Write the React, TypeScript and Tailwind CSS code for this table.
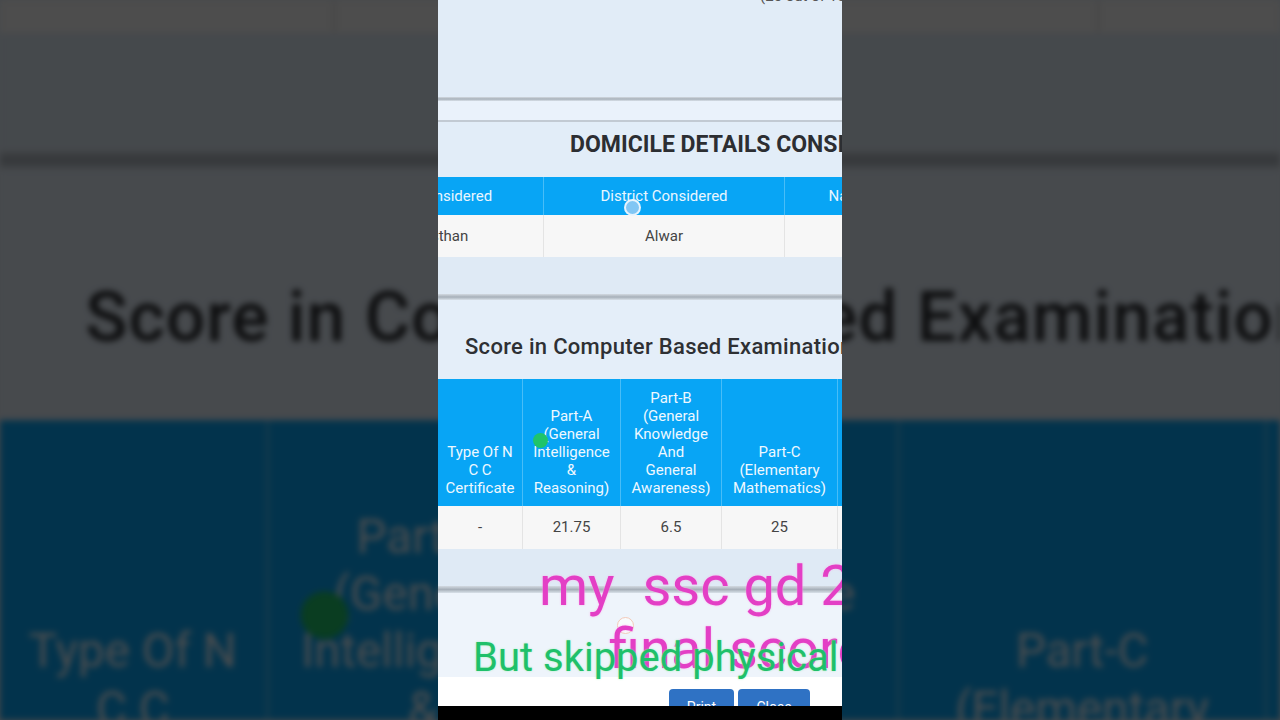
import React from "react";

const roboto = "font-['Roboto','Noto_Sans',sans-serif]";

// Score table header columns
const scoreCols = [
  { w: "w-[85px]", lines: ["Type Of N", "C C", "Certificate"], value: "-" },
  { w: "w-[98px]", lines: ["Part-A", "(General", "Intelligence", "&", "Reasoning)"], value: "21.75" },
  { w: "w-[101px]", lines: ["Part-B", "(General", "Knowledge", "And", "General", "Awareness)"], value: "6.5" },
  { w: "w-[116px]", lines: ["Part-C", "(Elementary", "Mathematics)"], value: "25" },
  { w: "w-[100px]", lines: [], value: "" },
];

const domicileCols = [
  { w: "w-[217px]", head: "State Considered", value: "Rajasthan" },
  { w: "w-[241px]", head: "District Considered", value: "Alwar" },
  { w: "w-[251px]", head: "Native Place Considered", value: "" },
];

function ShadowLine({ h }: { h: string }) {
  return <div className={`${h} shrink-0 bg-linear-to-b from-[#d3dae1] via-[#a7b0b9] to-[#d9e1e9]`} />;
}

function Frame() {
  return (
    <div className={`relative w-[404px] h-[720px] shrink-0 overflow-hidden flex flex-col bg-[#e2edf8] ${roboto}`}>
      {/* top of page, mostly scrolled away */}
      <div className="h-[97px] shrink-0 bg-[#e1ecf7] overflow-hidden">
        <div className="-mt-[15px] pl-[322px] text-[15px] text-[#555] whitespace-nowrap">(25 out of 100)</div>
      </div>
      <ShadowLine h="h-[4px]" />
      <div className="h-[19px] shrink-0 bg-[#eaf2fb]" />
      <div className="h-[2px] shrink-0 bg-[#c2cad3]" />

      {/* domicile card */}
      <div className="h-[55px] shrink-0 flex items-center pb-[9px] pl-[132px] whitespace-nowrap text-[23px] font-bold text-[#2c2e32]">
        DOMICILE DETAILS CONSIDERED
      </div>
      <div className="-ml-[111px] flex flex-col">
        <div className="flex h-[38px] bg-[#08a5f5]">
          {domicileCols.map((c) => (
            <div
              key={c.head}
              className={`${c.w} shrink-0 flex items-center justify-center border-r border-[#48bdf7] text-[15px] text-[#e9f6ff] whitespace-nowrap`}
            >
              {c.head}
            </div>
          ))}
        </div>
        <div className="flex h-[42px] bg-[#f7f7f7]">
          {domicileCols.map((c) => (
            <div
              key={c.head}
              className={`${c.w} shrink-0 flex items-center justify-center border-r border-[#e4e4e4] text-[15px] text-[#444]`}
            >
              {c.value}
            </div>
          ))}
        </div>
      </div>
      <div className="h-[37px] shrink-0 bg-[#dfeaf5]" />
      <ShadowLine h="h-[6px]" />

      {/* score card */}
      <div className="h-[79px] shrink-0 flex items-center pt-[13px] pl-[27px] whitespace-nowrap text-[22px] tracking-[0.3px] font-medium text-[#2e3034] bg-[#e4eef9]">
        Score in Computer Based Examination
      </div>
      <div className="flex h-[127px] shrink-0 bg-[#08a5f5]">
        {scoreCols.map((c, i) => (
          <div
            key={i}
            className={`${c.w} shrink-0 flex flex-col items-center justify-end pb-[9px] border-r border-[#48bdf7] text-[15px] leading-[18px] text-[#eef8ff] text-center`}
          >
            {c.lines.map((l) => (
              <span key={l + i} className="whitespace-nowrap">
                {l}
              </span>
            ))}
          </div>
        ))}
      </div>
      <div className="flex h-[43px] shrink-0 bg-[#f7f7f7]">
        {scoreCols.map((c, i) => (
          <div
            key={i}
            className={`${c.w} shrink-0 flex items-center justify-center border-r border-[#e4e4e4] text-[15px] text-[#444]`}
          >
            {c.value}
          </div>
        ))}
      </div>
      <div className="h-[37px] shrink-0 bg-[#dfeaf5]" />
      <ShadowLine h="h-[7px]" />
      <div className="h-[84px] shrink-0 bg-[#eef4fb]" />

      {/* footer buttons */}
      <div className="h-[29px] shrink-0 bg-white overflow-hidden flex items-start gap-[4px] pl-[231px] pt-[12px]">
        <div className="w-[65px] h-[34px] rounded-[4px] bg-[#2f72c4] text-white text-[14px] flex justify-center pt-[8px]">Print</div>
        <div className="w-[72px] h-[34px] rounded-[4px] bg-[#2f72c4] text-white text-[14px] flex justify-center pt-[8px]">Close</div>
      </div>
      <div className="flex-1 bg-black" />

      {/* touches and video captions drawn over the recording */}
      <div className="absolute left-[95px] top-[433px] w-[15px] h-[15px] rounded-full bg-[#1fc46b]" />
      <div className="absolute left-[186px] top-[199px] w-[17px] h-[17px] rounded-full bg-[#8fcaf4]/90 border-2 border-white/80" />
      <div className="absolute left-[179px] top-[617px] w-[17px] h-[17px] rounded-full bg-white/60 border border-[#f3c9b8]" />

      <div className="absolute left-[101px] top-[558px] whitespace-pre text-[56px] leading-none text-[#e33fc5] [text-shadow:0_0_2px_rgba(255,170,235,0.9)]">
        my  ssc gd 2024
      </div>
      <div className="absolute left-[171px] top-[621px] whitespace-pre text-[56px] leading-none text-[#e33fc5] [text-shadow:0_0_2px_rgba(255,170,235,0.9)]">
        final score
      </div>
      <div className="absolute left-[35px] top-[638px] whitespace-nowrap text-[40px] leading-none text-[#1fc06a] [text-shadow:0_0_2px_rgba(150,240,180,0.9)]">
        But skipped physical
      </div>
    </div>
  );
}

export default function App() {
  return (
    <div className="grid w-[1280px] h-[720px] overflow-hidden bg-[#46494c]">
      {/* blurred, dimmed ambient copy of the video frame */}
      <div className="[grid-area:1/1] w-full h-full overflow-hidden flex items-center justify-center blur-[3px] brightness-[0.31]">
        <div className="scale-[3.17] shrink-0">
          <Frame />
        </div>
      </div>
      <div className="[grid-area:1/1] justify-self-center">
        <Frame />
      </div>
    </div>
  );
}
